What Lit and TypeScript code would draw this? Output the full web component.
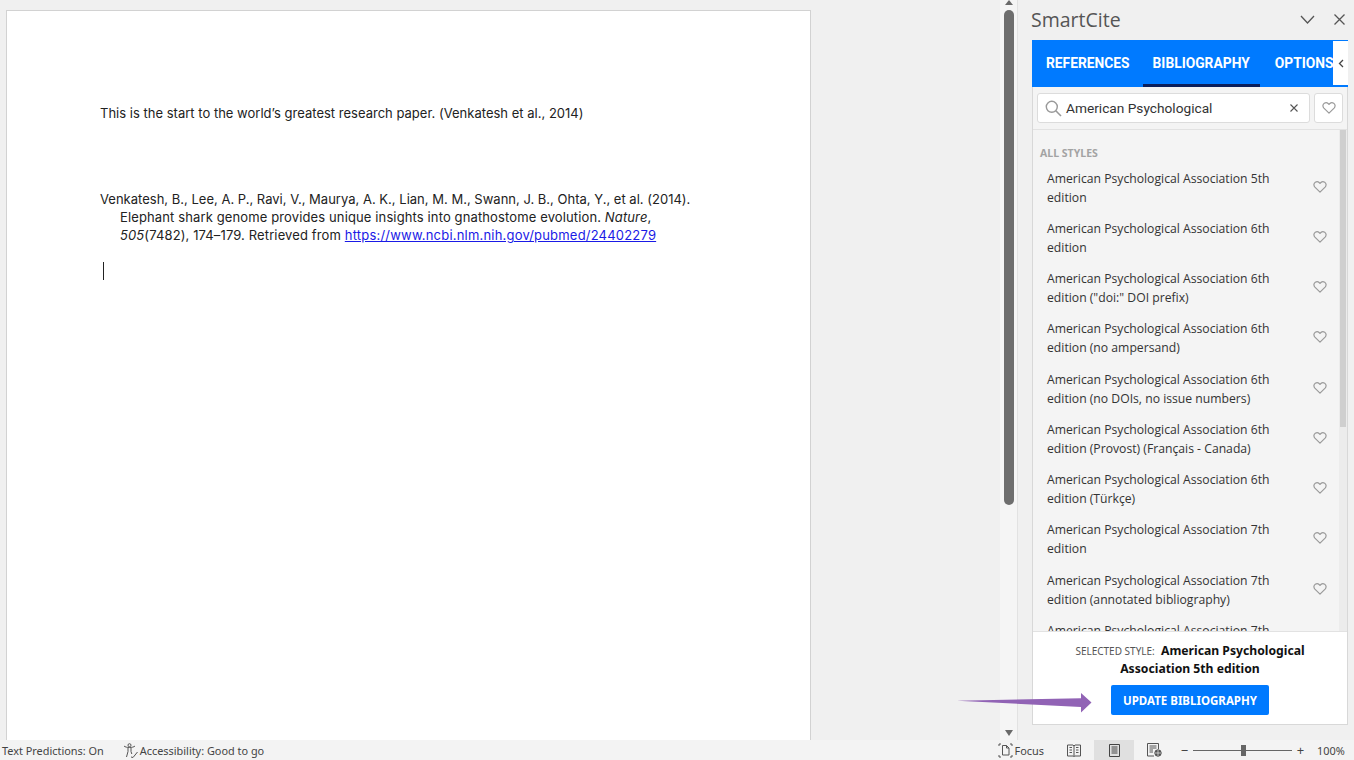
import { LitElement, html, css, svg } from "lit";
import { customElement } from "lit/decorators.js";

const STYLES = [
  ["American Psychological Association 5th", "edition"],
  ["American Psychological Association 6th", "edition"],
  ["American Psychological Association 6th", 'edition ("doi:" DOI prefix)'],
  ["American Psychological Association 6th", "edition (no ampersand)"],
  ["American Psychological Association 6th", "edition (no DOIs, no issue numbers)"],
  ["American Psychological Association 6th", "edition (Provost) (Français - Canada)"],
  ["American Psychological Association 6th", "edition (Türkçe)"],
  ["American Psychological Association 7th", "edition"],
  ["American Psychological Association 7th", "edition (annotated bibliography)"],
  ["American Psychological Association 7th", "edition"],
];

const heart = svg`<path d="M7 12.2 L1.9 7.1 C0.4 5.5 0.7 3.2 2.3 2.2 C3.8 1.3 5.8 1.7 7 3.4 C8.2 1.7 10.2 1.3 11.7 2.2 C13.3 3.2 13.6 5.5 12.1 7.1 Z" fill="none" stroke="#9a9a9a" stroke-width="1.2" stroke-linejoin="round"/>`;

@customElement("app-root")
export class AppRoot extends LitElement {
  static styles = css`
    :host { display: block; width: 1354px; height: 760px; position: relative; overflow: hidden; background: #f0f0f0; }
    .main { display: flex; height: 740px; }
    .docarea { width: 1000px; flex: none; padding: 10px 0 0 6px; box-sizing: border-box; }
    .page { width: 805px; height: 730px; box-sizing: border-box; background: #fff; border: 1px solid #d2d2d2; border-bottom: none; padding: 93px 0 0 93px; font-family: Inter, sans-serif; font-size: 13px; color: #222; line-height: 18px; }
    .line1 { height: 18px; white-space: nowrap; letter-spacing: 0.012px; }
    .bib { margin-top: 68px; width: 640px; white-space: nowrap; }
    .bib div { height: 18px; padding-left: 20px; letter-spacing: 0.125px; }
    .bib div.first { padding-left: 0; letter-spacing: 0.01px; }
    .bib a { color: #1a1ae6; text-decoration: underline; letter-spacing: 0.2px; }
    .caret { width: 1px; height: 18px; background: #222; margin: 18px 0 0 3px; }
    .vscroll { width: 18px; flex: none; display: flex; flex-direction: column; align-items: flex-start; padding-left: 4px; box-sizing: border-box; background: #f5f5f5; border-right: 1px solid #e2e2e2; }
    .arrow { width: 0; height: 0; border-left: 4px solid transparent; border-right: 4px solid transparent; margin-left: 1px; }
    .arrow.up { border-bottom: 5px solid #6a6a6a; }
    .arrow.down { border-top: 6px solid #6a6a6a; margin-top: auto; margin-bottom: 4px; }
    .thumb { width: 10px; height: 495px; background: #6e6e6e; border-radius: 5px; margin-top: 5px; }
    .pane { flex: 1; display: flex; flex-direction: column; min-width: 0; padding-left: 14px; }
    .panehead { height: 40px; display: flex; align-items: center; margin-left: -1px; color: #555; font-family: "Open Sans", sans-serif; font-size: 19.5px; box-sizing: border-box; padding-bottom: 2px; }
    .panehead .t { flex: 1; }
    .panehead svg { display: block; }
    .pbtn { margin-right: 19px; }
    .addin { width: 316px; height: 685px; box-sizing: border-box; border: 1px solid #d8d8d8; display: flex; flex-direction: column; background: #f4f4f4; position: relative; }
    .tabs { height: 47px; flex: none; background: #007aff; display: flex; padding-left: 3px; margin: -1px -1px 0 -1px; font-family: Roboto, sans-serif; font-weight: 700; font-size: 13.8px; color: #fff; position: relative; overflow: hidden; box-sizing: border-box; }
    .tab { padding: 1px 11px 0; display: flex; align-items: center; white-space: nowrap; box-sizing: border-box; height: 47px; border-bottom: 3px solid transparent; }
    .tab.on { border-bottom-color: #0b1f5c; margin: 0 4px 0 1px; padding: 1px 10px 0; }
    .tab:first-child { padding-right: 12px; }
    .tabmore { position: absolute; right: 0; top: 1px; width: 15px; height: 44px; background: #fff; color: #444; display: flex; align-items: center; justify-content: center; }
    .searchrow { height: 43px; flex: none; display: flex; gap: 4px; padding: 6px 4px 0 4px; box-sizing: border-box; border-bottom: 1px solid #e2e2e2; background: #f4f4f4; }
    .search { width: 273px; height: 30px; box-sizing: border-box; background: #fff; border: 1px solid #dcdcdc; border-radius: 3px; display: flex; align-items: center; padding: 0 11px 0 7px; gap: 4px; font-family: Roboto, sans-serif; font-size: 13.7px; color: #333; }
    .search .q { flex: 1; }
    .favbtn { width: 29px; height: 30px; box-sizing: border-box; background: #fff; border: 1px solid #dcdcdc; border-radius: 3px; display: flex; align-items: center; justify-content: center; }
    .listwrap { flex: 1; min-height: 0; position: relative; overflow: hidden; }
    .list { padding: 17px 0 0 7px; font-family: "Open Sans", sans-serif; }
    .heading { font-size: 10.5px; font-weight: 700; color: #a3a3a3; line-height: 13px; height: 13px; margin-bottom: 5.6px; }
    .item { height: 50.25px; display: flex; align-items: flex-start; padding: 3px 20px 0 7px; font-size: 12.2px; line-height: 19px; color: #333; white-space: nowrap; box-sizing: border-box; }
    .item .l { flex: 1; }
    .item svg { margin-top: 11px; }
    .track { position: absolute; right: 0; top: 0; bottom: 0; width: 8px; background: #ececec; }
    .bar { width: 6px; height: 297px; background: #cfcfcf; margin-left: 1px; }
    .foot { height: 93px; flex: none; background: #fff; border-top: 1px solid #e2e2e2; box-sizing: border-box; display: flex; flex-direction: column; align-items: center; padding-top: 10px; }
    .sel { width: 250px; height: 34px; text-align: center; font-family: "Noto Sans", sans-serif; font-size: 12.2px; font-weight: 700; line-height: 17px; color: #111; }
    .sel span { font-weight: 400; font-size: 10px; color: #555; margin-right: 3px; }
    .update { margin-top: 9px; width: 158px; height: 30px; background: #007aff; border: none; border-radius: 2px; color: #fff; font-family: "Noto Sans", sans-serif; font-weight: 700; font-size: 11.5px; display: flex; align-items: center; justify-content: center; }
    .status { height: 20px; display: flex; align-items: center; background: #f3f3f3; font-family: "Noto Sans", sans-serif; font-size: 10.9px; color: #444; padding-left: 2px; white-space: nowrap; }
    .status svg { display: block; flex: none; }
    .acc { display: flex; align-items: center; gap: 2px; margin-left: 19px; }
    .right { margin-left: auto; display: flex; align-items: center; height: 20px; }
    .focus { display: flex; align-items: center; gap: 2px; margin-right: 10px; }
    .view { width: 40px; height: 20px; display: flex; align-items: center; justify-content: center; }
    .view.on { background: #e0e0e0; }
    .zoomctl { display: flex; align-items: center; margin: 0 12px 0 6px; gap: 4px; }
    .slider { width: 99px; height: 1px; background: #666; position: relative; }
    .knob { position: absolute; left: 48px; top: -5px; width: 5px; height: 11px; background: #666; }
    .sign { font-size: 13px; line-height: 13px; width: 9px; text-align: center; }
    .pct { width: 37px; }
    .callout { position: absolute; left: 957px; top: 692px; }
  `;

  render() {
    return html`
      <div class="main">
        <div class="docarea">
          <div class="page">
            <div class="line1">This is the start to the world’s greatest research paper. (Venkatesh et al., 2014)</div>
            <div class="bib">
              <div class="first">Venkatesh, B., Lee, A. P., Ravi, V., Maurya, A. K., Lian, M. M., Swann, J. B., Ohta, Y., et al. (2014).</div>
              <div>Elephant shark genome provides unique insights into gnathostome evolution. <i>Nature</i>,</div>
              <div><i>505</i>(7482), 174–179. Retrieved from <a>https://www.ncbi.nlm.nih.gov/pubmed/24402279</a></div>
            </div>
            <div class="caret"></div>
          </div>
        </div>
        <div class="vscroll">
          <div class="arrow up"></div>
          <div class="thumb"></div>
          <div class="arrow down"></div>
        </div>
        <div class="pane">
          <div class="panehead">
            <div class="t">SmartCite</div>
            <svg class="pbtn" width="15" height="9" viewBox="0 0 15 9"><path d="M1 1 L7.5 8 L14 1" fill="none" stroke="#555" stroke-width="1.3"/></svg>
            <svg class="pbtn" style="margin-right:9px" width="11" height="11" viewBox="0 0 11 11"><path d="M0.5 0.5 L10.5 10.5 M10.5 0.5 L0.5 10.5" stroke="#555" stroke-width="1.3"/></svg>
          </div>
          <div class="addin">
            <div class="tabs">
              <div class="tab">REFERENCES</div>
              <div class="tab on">BIBLIOGRAPHY</div>
              <div class="tab">OPTIONS</div>
              <div class="tabmore"><svg width="6" height="9" viewBox="0 0 6 9"><path d="M5 1 L1.5 4.5 L5 8" fill="none" stroke="#444" stroke-width="1.3"/></svg></div>
            </div>
            <div class="searchrow">
              <div class="search">
                <svg width="17" height="17" viewBox="0 0 17 17"><circle cx="6.8" cy="6.8" r="5.5" fill="none" stroke="#999" stroke-width="1.4"/><path d="M10.8 10.8 L16 16" stroke="#999" stroke-width="1.6"/></svg>
                <div class="q">American Psychological</div>
                <svg width="8" height="8" viewBox="0 0 8 8"><path d="M0.5 0.5 L7.5 7.5 M7.5 0.5 L0.5 7.5" stroke="#555" stroke-width="1.1"/></svg>
              </div>
              <div class="favbtn"><svg width="14" height="14" viewBox="0 0 14 14">${heart}</svg></div>
            </div>
            <div class="listwrap">
              <div class="list">
                <div class="heading">ALL STYLES</div>
                ${STYLES.map(
                  ([a, b]) => html`<div class="item"><div class="l">${a}<br />${b}</div><svg width="14" height="14" viewBox="0 0 14 14">${heart}</svg></div>`
                )}
              </div>
              <div class="track"><div class="bar"></div></div>
            </div>
            <div class="foot">
              <div class="sel"><span>SELECTED STYLE:</span> American Psychological Association 5th edition</div>
              <div class="update">UPDATE BIBLIOGRAPHY</div>
            </div>
          </div>
        </div>
      </div>
      <div class="status">
        <div>Text Predictions: On</div>
        <div class="acc">
          <svg width="15" height="15" viewBox="0 0 15 15" fill="none" stroke="#555" stroke-width="1"><circle cx="6.5" cy="2.2" r="1.5"/><path d="M1 3 C3 5 10 5 12 3 M5 5 V8.5 L3.5 14 M8 5 V8.5 L8.8 11 M8 14 L10 14.5 L14.5 9"/></svg>
          <span>Accessibility: Good to go</span>
        </div>
        <div class="right">
          <div class="focus">
            <svg width="15" height="15" viewBox="0 0 15 15" fill="none" stroke="#555" stroke-width="1"><path d="M1 3 V1 H3 M12 1 H14 V3 M1 12 V14 H3 M12 14 H14 V12 M4.5 12 V2.5 H8.5 L11 5 V12 Z M8.5 2.5 V5 H11"/></svg>
            <span>Focus</span>
          </div>
          <div class="view"><svg width="14" height="13" viewBox="0 0 14 13" fill="none" stroke="#555" stroke-width="1"><path d="M0.5 1 H6 L7 2 L8 1 H13.5 V12 H8 L7 12.5 L6 12 H0.5 Z M7 2 V12 M2.5 3.5 H5 M2.5 6 H5 M2.5 8.5 H5 M9 3.5 H11.5 M9 6 H11.5 M9 8.5 H11.5"/></svg></div>
          <div class="view on"><svg width="11" height="13" viewBox="0 0 11 13" fill="none" stroke="#444" stroke-width="1"><path d="M0.5 0.5 H10.5 V12.5 H0.5 Z M2.5 3 H8.5 M2.5 5 H8.5 M2.5 7 H8.5 M2.5 9 H8.5"/></svg></div>
          <div class="view"><svg width="15" height="14" viewBox="0 0 15 14" fill="none" stroke="#555" stroke-width="1"><path d="M7 13 H0.5 V0.5 H11.5 V6 M2.5 3 H9.5 M2.5 5 H9.5 M2.5 7 H6 M2.5 9 H6"/><circle cx="11" cy="10" r="3.2" fill="#555"/><path d="M8 10 H14 M11 7 V13" stroke="#eee" stroke-width="0.7"/></svg></div>
          <div class="zoomctl">
            <div class="sign">−</div>
            <div class="slider"><div class="knob"></div></div>
            <div class="sign">+</div>
          </div>
          <div class="pct">100%</div>
        </div>
      </div>
      <svg class="callout" width="136" height="22" viewBox="0 0 136 22"><path d="M0 8.7 L124 6.3 L124 1 L134.5 10.6 L124 20.5 L124 15 Z" fill="#9163b5"/></svg>
    `;
  }
}
